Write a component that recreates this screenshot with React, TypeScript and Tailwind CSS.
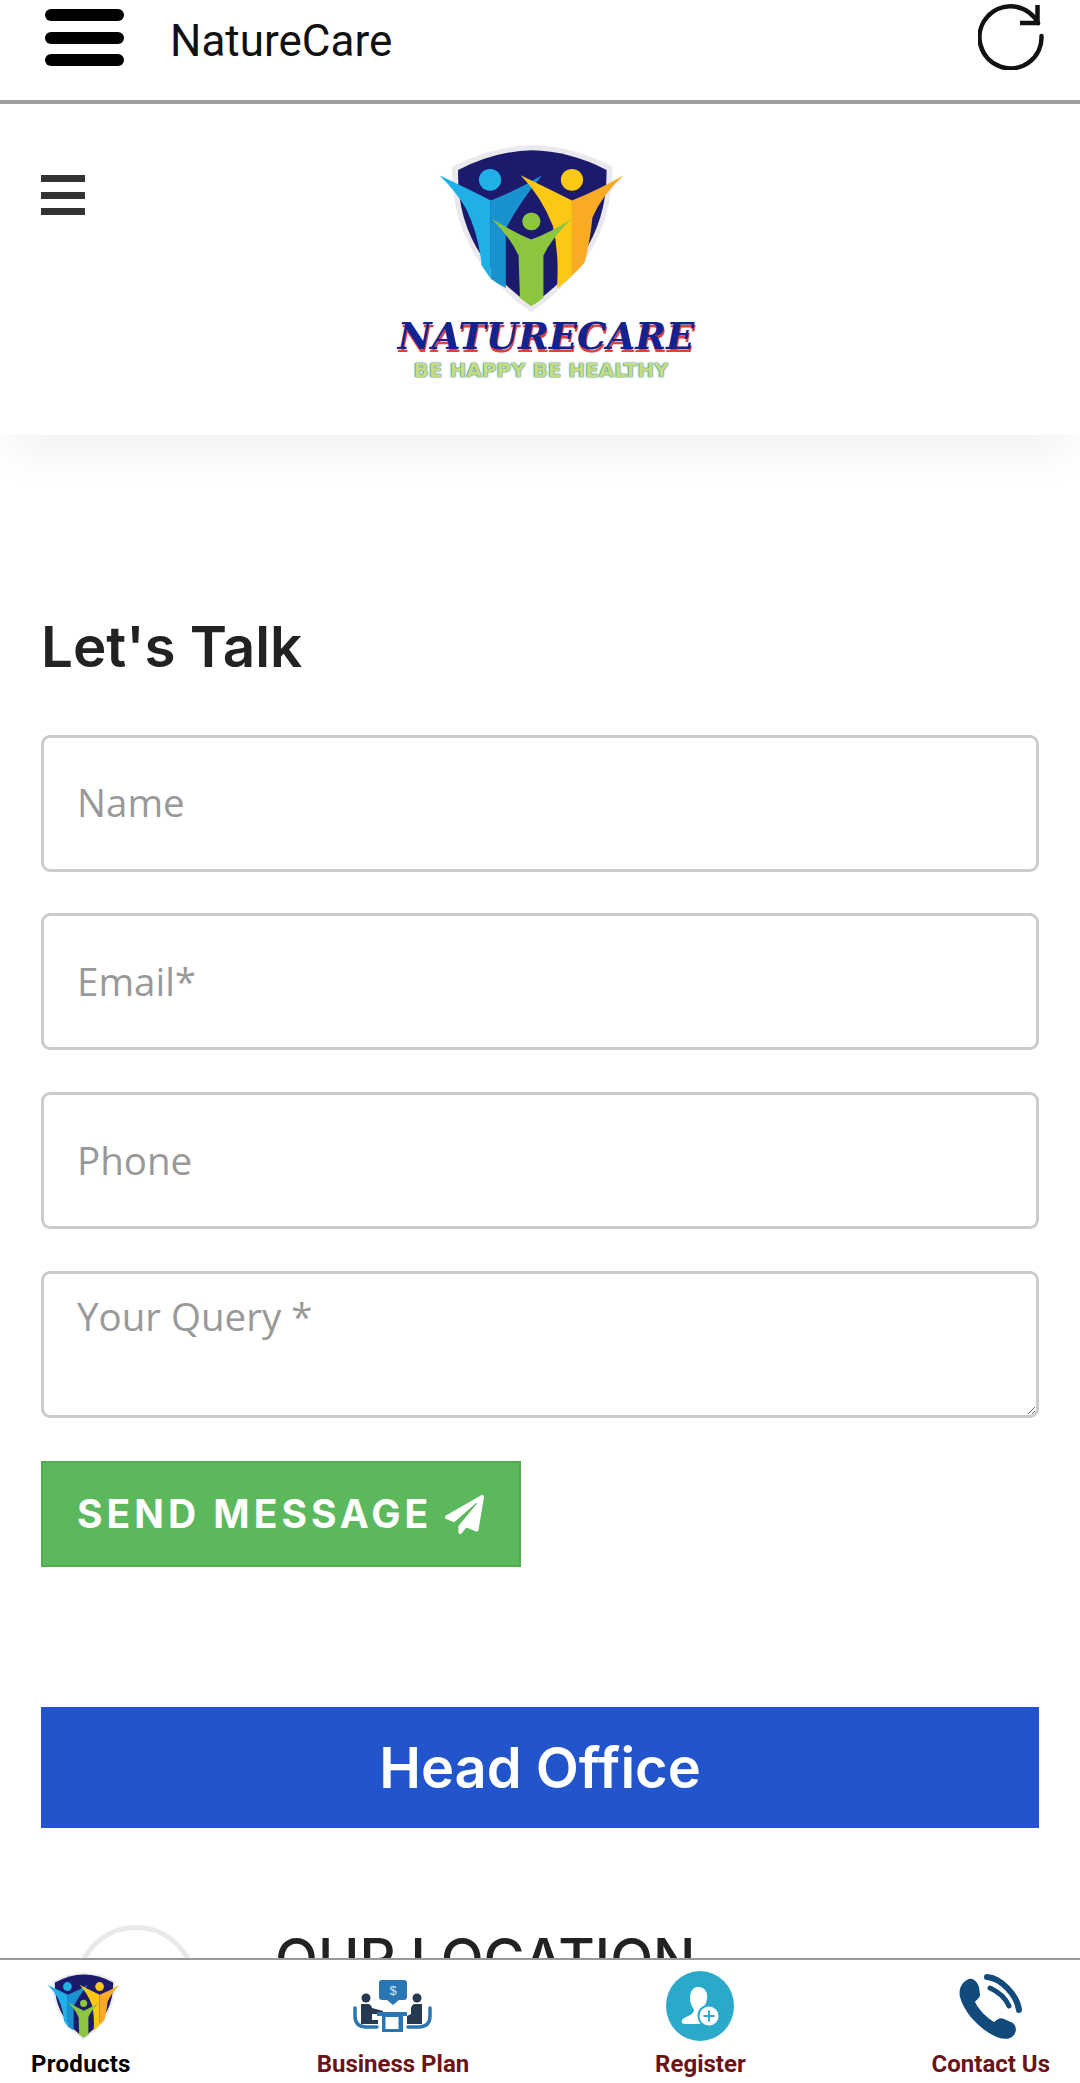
import type { ReactNode } from "react";
import { FaPaperPlane } from "react-icons/fa";

function Shield({ className }: { className: string }) {
  return (
    <svg className={className} viewBox="238 44 554 506" preserveAspectRatio="none">
      <path d="M280 112Q400 50 517 48Q640 50 757 112Q762 380 515 550Q273 380 280 112Z" fill="#e9e9ee" />
      <path d="M298 122Q410 65 517 63Q630 65 740 122Q745 370 515 530Q290 370 298 122Z" fill="#1b1a6d" />
      <circle cx="393" cy="152" r="33" fill="#1fb0e8" />
      <path d="M242 138Q330 180 395 214L395 450Q385 435 368 410Q360 320 322 240Q295 190 242 138Z" fill="#1fb0e8" />
      <path d="M395 214Q470 185 548 138Q480 220 440 300L440 478Q415 465 395 450Z" fill="#1a92d0" />
      <circle cx="637" cy="152" r="33" fill="#fcc917" />
      <path d="M484 138Q570 180 637 214L637 440Q620 458 592 480Q600 380 580 290Q545 200 484 138Z" fill="#fdc815" />
      <path d="M637 214Q710 185 791 138Q725 200 698 265Q690 340 675 400Q655 425 637 440Z" fill="#f9ab25" />
      <circle cx="516" cy="277" r="27" fill="#8cc63f" />
      <path d="M398 270Q470 312 516 332Q570 312 635 270Q575 330 552 380L552 507Q530 525 515 532Q500 522 482 507L478 380Q450 320 398 270Z" fill="#8cc63f" />
    </svg>
  );
}

function PlanIcon() {
  return (
    <svg className="h-[52px] w-[79px]" viewBox="0 0 79 52">
      <path d="M26 3Q26 0 29 0H51Q54 0 54 3V17Q54 20 51 20H46L40 25L34 20H29Q26 20 26 17Z" fill="#2a75b3" />
      <text x="40" y="15" textAnchor="middle" fontSize="13" fontFamily="Liberation Sans, sans-serif" fill="#cfe6f5">
        $
      </text>
      <circle cx="13" cy="18" r="4.5" fill="#26394f" />
      <circle cx="64" cy="18" r="4.5" fill="#26394f" />
      <path d="M8 24H15Q18 24 19 28L30 31V34H19V40H25V44H8Z" fill="#26394f" />
      <path d="M69 24H62Q59 24 58 28V34L54 36V44H69Z" fill="#26394f" />
      <path d="M2 28V36Q2 46 12 47H24" fill="none" stroke="#2a75b3" strokeWidth="3.5" strokeLinecap="round" />
      <path d="M77 28V36Q77 46 67 47H55" fill="none" stroke="#2a75b3" strokeWidth="3.5" strokeLinecap="round" />
      <path d="M24 32H54V36H50V52H29V36H24Z" fill="#2a75b3" />
      <rect x="32.5" y="37" width="13" height="12" fill="#ffffff" />
    </svg>
  );
}

function RegisterIcon() {
  return (
    <svg className="h-[70px] w-[68px]" viewBox="0 0 68 70">
      <ellipse cx="34" cy="35" rx="34" ry="35" fill="#2aa9cb" />
      <path d="M32 16C39 16 42 21 41 28C40 33 38 36 37 39C37 42 41 44 45 45L38 53H19C14 53 15 48 20 46C25 44 28 42 28 39C26 35 24 32 24 27C24 20 27 16 32 16Z" fill="#ffffff" />
      <circle cx="43" cy="45" r="10.5" fill="#ffffff" stroke="#2aa9cb" strokeWidth="2" />
      <path d="M43 39.5V50.5M37.5 45H48.5" stroke="#2aa9cb" strokeWidth="2" />
    </svg>
  );
}

function PhoneIcon() {
  return (
    <svg className="h-[66px] w-[64px]" viewBox="0 0 64 66">
      <path d="M10 6C15 5 18 9 20 14L21 22C21 25 17 27 16 29C20 37 27 44 35 49C38 47 41 44 45 46L54 50C58 54 58 60 53 64C47 68 38 65 30 60C16 51 5 38 1 24C-1 15 4 8 10 6Z" fill="#134a7c" />
      <path d="M28 4C42 5 58 22 60 37" fill="none" stroke="#134a7c" strokeWidth="6" strokeLinecap="round" />
      <path d="M31 15C40 19 47 26 50 33" fill="none" stroke="#134a7c" strokeWidth="5" strokeLinecap="round" />
    </svg>
  );
}

function NavItem({ icon, label, active }: { icon: ReactNode; label: string; active?: boolean }) {
  return (
    <div className="flex flex-col items-center">
      <div className="flex h-[72px] items-center">{icon}</div>
      <span
        className={[
          "mt-[8px] font-['Roboto',sans-serif] text-[24px] leading-[28px] font-bold",
          active ? "tracking-[0.3px] text-black" : "text-[#6b1418]",
        ].join(" ")}
      >
        {label}
      </span>
    </div>
  );
}

const fieldClass =
  "block w-full rounded-[9px] border-[3px] border-[#cccccc] bg-white px-[33px] font-['Open_Sans',sans-serif] text-[38.5px] text-[#333] outline-none placeholder:text-[#999999]";

export default function App() {
  return (
    <div className="flex h-[2083px] w-[1080px] flex-col overflow-hidden bg-white">
      {/* app bar */}
      <div className="flex h-[104px] shrink-0 items-start border-b-4 border-[#9e9e9e] pt-[9px] pr-[36px] pl-[45px]">
        <div className="flex h-[57px] w-[79px] flex-col justify-between">
          <span className="h-[12px] rounded-full bg-black" />
          <span className="h-[12px] rounded-full bg-black" />
          <span className="h-[12px] rounded-full bg-black" />
        </div>
        <span className="mt-[10px] ml-[46px] font-['Roboto',sans-serif] text-[44px] leading-none text-[#111]">NatureCare</span>
        <svg className="mt-[-5px] ml-auto h-[66px] w-[66px]" viewBox="0 0 66 66" fill="none" stroke="#111" strokeWidth="4.5">
          <path d="M60 19A31 31 0 1 0 63.5 32" strokeLinecap="round" />
          <path d="M59.5 1V19H42" />
        </svg>
      </div>

      <div className="min-h-0 flex-1 overflow-hidden">
        {/* site header */}
        <header className="grid h-[331px] grid-cols-[1fr_300px_1fr] bg-white pt-[71px] shadow-[0_30px_40px_-10px_rgba(0,0,0,0.05)]">
          <div className="ml-[41px] flex h-[40px] w-[44px] flex-col justify-between">
            <span className="h-[7px] bg-[#333]" />
            <span className="h-[7px] bg-[#333]" />
            <span className="h-[7px] bg-[#333]" />
          </div>
          <div className="mt-[-31px] flex flex-col items-center">
            <Shield className="mr-[18px] h-[168px] w-[186px] shrink-0" />
            <span className="mt-[4px] ml-[12px] font-['DejaVu_Serif',serif] text-[37px] leading-[40px] font-bold whitespace-nowrap text-[#12238f] italic [text-shadow:1px_3px_0_#e0403f]">
              NATURECARE
            </span>
            <span className="mt-[3px] ml-[2px] font-['DejaVu_Sans',sans-serif] text-[20px] leading-[22px] font-bold whitespace-nowrap text-[#c5dc80] [text-shadow:0_0_2px_#1f7f8f,0_0_1px_#1f7f8f]">
              BE HAPPY BE HEALTHY
            </span>
          </div>
        </header>

        <main className="px-[41px] pt-[180px]">
          <h2 className="font-['Inter',sans-serif] text-[56.5px] leading-[64px] font-semibold text-[#222]">Let's Talk</h2>
          <form className="mt-[56px] flex flex-col">
            <input className={`${fieldClass} h-[137px] pb-[3px]`} placeholder="Name" />
            <input className={`${fieldClass} mt-[41px] h-[137px] pb-[2px]`} placeholder="Email*" />
            <input className={`${fieldClass} mt-[42px] h-[137px] pb-[2px]`} placeholder="Phone" />
            <textarea className={`${fieldClass} mt-[42px] h-[147px] py-[14px]`} placeholder="Your Query *" />
            <button
              className="mt-[43px] flex h-[106px] w-[480px] items-center border-2 border-[#4cae4c] bg-[#5cb85c] pl-[34px] font-['Inter',sans-serif] text-[39px] font-bold tracking-[4px] text-white"
              type="button"
            >
              SEND MESSAGE
              <FaPaperPlane className="ml-[13px] h-[39px] w-[39px]" />
            </button>
          </form>

          <div className="mt-[140px] flex h-[121px] items-center justify-center bg-[#2255cc] font-['Inter',sans-serif] text-[56px] font-semibold text-white">
            Head Office
          </div>

          <div className="mt-[97px] flex">
            <div className="ml-[34px] h-[122px] w-[122px] rounded-full border-[5px] border-[#e9e9e9]" />
            <h3 className="mt-[2px] ml-[78px] font-['Inter',sans-serif] text-[56px] leading-[64px] font-medium whitespace-nowrap text-[#222]">
              OUR LOCATION
            </h3>
          </div>
        </main>
      </div>

      {/* bottom nav */}
      <nav className="flex h-[125px] shrink-0 items-start justify-between border-t-2 border-[#999999] bg-white pt-[10px] pr-[30px] pl-[31px]">
        <NavItem icon={<Shield className="ml-[5px] h-[68px] w-[73px]" />} label="Products" active />
        <NavItem icon={<PlanIcon />} label="Business Plan" />
        <NavItem icon={<RegisterIcon />} label="Register" />
        <NavItem icon={<PhoneIcon />} label="Contact Us" />
      </nav>
    </div>
  );
}
